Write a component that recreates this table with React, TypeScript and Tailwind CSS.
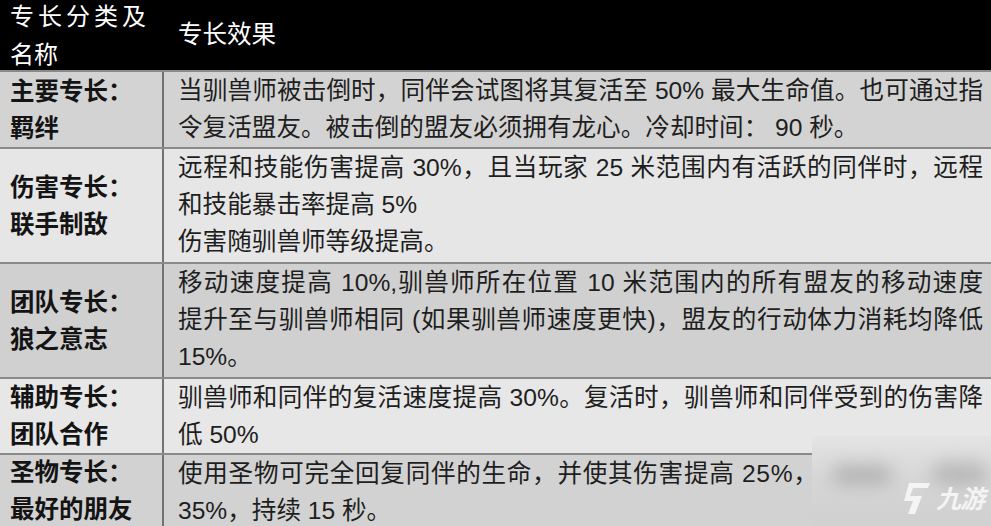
import React from "react";

const FONT = { fontFamily: '"Liberation Sans", "Noto Sans CJK SC", sans-serif' };

type Line = { t: string; j?: boolean; extra?: string };
type Row = { left: string[]; right: Line[]; bg: string; h: string };

const rows: Row[] = [
  {
    left: ["主要专长：", "羁绊"],
    right: [
      { t: "当驯兽师被击倒时，同伴会试图将其复活至 50% 最大生命值。也可通过指", j: true },
      { t: "令复活盟友。被击倒的盟友必须拥有龙心。冷却时间： 90 秒。" },
    ],
    bg: "bg-[#d3d3d3]",
    h: "h-[77px]",
  },
  {
    left: ["伤害专长：", "联手制敌"],
    right: [
      { t: "远程和技能伤害提高 30%，且当玩家 25 米范围内有活跃的同伴时，远程", j: true },
      { t: "和技能暴击率提高 5%" },
      { t: "伤害随驯兽师等级提高。" },
    ],
    bg: "bg-[#e6e6e6]",
    h: "h-[115px]",
  },
  {
    left: ["团队专长：", "狼之意志"],
    right: [
      { t: "移动速度提高 10%,驯兽师所在位置 10 米范围内的所有盟友的移动速度", j: true },
      { t: "提升至与驯兽师相同 (如果驯兽师速度更快)，盟友的行动体力消耗均降低", j: true },
      { t: "15%。" },
    ],
    bg: "bg-[#d0d0d0]",
    h: "h-[115px]",
  },
  {
    left: ["辅助专长：", "团队合作"],
    right: [
      { t: "驯兽师和同伴的复活速度提高 30%。复活时，驯兽师和同伴受到的伤害降", j: true },
      { t: "低 50%" },
    ],
    bg: "bg-[#e7e7e7]",
    h: "h-[76px]",
  },
  {
    left: ["圣物专长：", "最好的朋友"],
    right: [
      { t: "使用圣物可完全回复同伴的生命，并使其伤害提高 25%，", extra: "tracking-[0.7px]" },
      { t: "35%，持续 15 秒。" },
    ],
    bg: "bg-[#d2d2d2]",
    h: "h-[73px]",
  },
];

export default function App() {
  return (
    <div className="relative w-[991px] h-[526px] overflow-hidden bg-[#d2d2d2]" style={FONT}>
      <div className="flex h-[70px] bg-black text-white">
        <div className="w-[164px] pl-[10px] text-[24px] leading-[38px] -mt-[2px] shrink-0">
          <div className="tracking-[4px] whitespace-nowrap">专长分类及</div>
          <div>名称</div>
        </div>
        <div className="flex items-center pl-[14px] text-[24.5px]">专长效果</div>
      </div>
      {rows.map((r, i) => (
        <div key={i} className={`flex border-t-2 border-[#8a8a8a] ${r.bg} ${r.h}`}>
          <div className="w-[164px] shrink-0 border-r-2 border-[#727272] flex flex-col justify-center pl-[10px] text-[24.5px] leading-[37px] font-bold text-[#141414]">
            {r.left.map((t, j) => (
              <div key={j} className="whitespace-nowrap">{t}</div>
            ))}
          </div>
          <div className="flex-1 min-w-0 pl-[14px] pr-[8px] text-[24.6px] leading-[37px] text-[#1e1e1e]">
            {r.right.map((l, j) =>
              l.j ? (
                <div key={j} className="text-justify [text-align-last:justify]">{l.t}</div>
              ) : (
                <div key={j} className={`whitespace-nowrap ${l.extra ?? ""}`}>{l.t}</div>
              )
            )}
          </div>
        </div>
      ))}
      {/* blurred watermark region */}
      <div className="absolute left-[812px] top-[436px] w-[179px] h-[90px] overflow-hidden bg-gradient-to-b from-[#e4e4e4] via-[#d6d6d6] to-[#d0d0d0]">
        <div className="absolute left-[20px] top-[30px] w-[60px] h-[18px] rounded-full bg-[#b0b0b0] blur-[9px]" />
        <div className="absolute left-[120px] top-[28px] w-[55px] h-[20px] rounded-full bg-[#b4b4b4] blur-[9px]" />
        <svg className="absolute left-[88px] top-[45px]" width="32" height="36" viewBox="0 0 32 36">
          <path d="M9 2 L30 2 L28 7 L13 7 L10 15 L22 15 L15 33 L8 33 L13 20 L4 20 Z" fill="#f4f4f4" />
        </svg>
        <div className="absolute left-[124px] top-[49px] text-[25px] leading-[28px] italic font-bold text-[#f4f4f4] tracking-[-1px]">
          九游
        </div>
      </div>
    </div>
  );
}
